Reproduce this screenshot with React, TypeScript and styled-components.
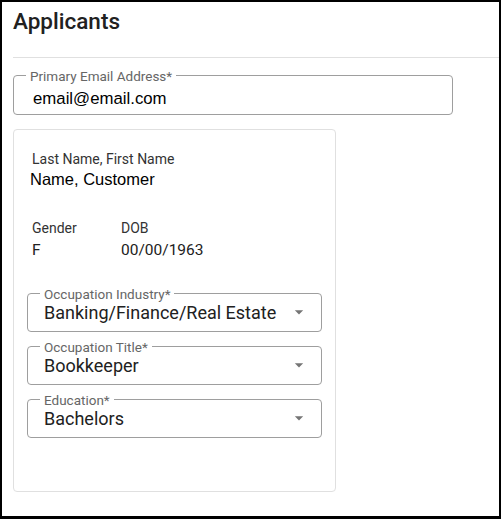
import React from "react";
import styled, { createGlobalStyle } from "styled-components";

const Global = createGlobalStyle`
  html, body { margin: 0; padding: 0; background: #ffffff; }
  * { box-sizing: border-box; }
`;

const Frame = styled.div`
  width: 501px;
  height: 519px;
  border: 2px solid #000;
  border-bottom-width: 3px;
  background: #fff;
  font-family: Roboto, "Liberation Sans", Arial, sans-serif;
  color: #212121;
  overflow: hidden;
`;

const Header = styled.header`
  padding: 6px 0 0 11px;
  height: 55px;
`;

const Title = styled.h1`
  margin: 0;
  font-size: 22.5px;
  line-height: 26px;
  font-weight: 500;
  color: #212121;
`;

const Divider = styled.hr`
  margin: 0 0 0 11px;
  border: 0;
  height: 1px;
  background: #e0e0e0;
`;

const Body = styled.main`
  padding: 17px 0 0 11px;
  display: flex;
  flex-direction: column;
  align-items: flex-start;
  gap: 14px;
`;

const OutlinedBox = styled.div<{ $width?: number; $height: number }>`
  position: relative;
  width: ${(p) => (p.$width ? `${p.$width}px` : "100%")};
  height: ${(p) => p.$height}px;
  border: 1px solid #9e9e9e;
  border-radius: 4px;
  display: flex;
  align-items: flex-start;
`;

const FloatLabel = styled.span`
  position: absolute;
  top: -8px;
  left: 12px;
  padding: 0 4px;
  background: #fff;
  font-size: 13.5px;
  line-height: 16px;
  color: #666;
  white-space: nowrap;
`;

const TextValue = styled.span`
  padding: 13px 0 0 19px;
  font-family: "Liberation Sans", Arial, sans-serif;
  font-size: 16.8px;
  line-height: 19px;
  color: #000;
`;

const SelectValue = styled.span`
  flex: 1;
  padding: 8px 0 0 16px;
  font-size: 18px;
  line-height: 22px;
  color: #212121;
  white-space: nowrap;
`;

const Arrow = styled.svg`
  position: absolute;
  right: 12px;
  top: 8px;
  width: 20px;
  height: 20px;
  fill: #757575;
`;

const Card = styled.section`
  width: 323px;
  border: 1px solid #e0e0e0;
  border-radius: 4px;
  padding: 21px 13px 53px;
  display: flex;
  flex-direction: column;
`;

const InfoBlock = styled.div`
  padding-left: 5px;
  display: flex;
  flex-direction: column;
`;

const InfoRow = styled.div`
  display: flex;
  margin-top: 31px;
`;

const InfoCell = styled.div<{ $width?: number }>`
  width: ${(p) => (p.$width ? `${p.$width}px` : "auto")};
  display: flex;
  flex-direction: column;
`;

const InfoLabel = styled.span`
  font-size: 14px;
  line-height: 16px;
  color: #333;
`;

const NameValue = styled.span`
  margin: 3px 0 0 -2px;
  font-family: "Liberation Sans", Arial, sans-serif;
  font-size: 16.5px;
  line-height: 19px;
  color: #000;
`;

const InfoValue = styled.span`
  margin-top: 5px;
  font-size: 15.5px;
  line-height: 18px;
  color: #212121;
`;

const Selects = styled.div`
  margin-top: 34px;
  display: flex;
  flex-direction: column;
  gap: 14px;
`;

function Select({ label, value }: { label: string; value: string }) {
  return (
    <OutlinedBox $height={39}>
      <FloatLabel>{label}</FloatLabel>
      <SelectValue>{value}</SelectValue>
      <Arrow viewBox="0 0 24 24">
        <path d="M7 10l5 5 5-5z" />
      </Arrow>
    </OutlinedBox>
  );
}

export default function App() {
  return (
    <>
      <Global />
      <Frame>
        <Header>
          <Title>Applicants</Title>
        </Header>
        <Divider />
        <Body>
          <OutlinedBox $width={440} $height={40}>
            <FloatLabel>Primary Email Address*</FloatLabel>
            <TextValue>email@email.com</TextValue>
          </OutlinedBox>
          <Card>
            <InfoBlock>
              <InfoCell>
                <InfoLabel>Last Name, First Name</InfoLabel>
                <NameValue>Name, Customer</NameValue>
              </InfoCell>
              <InfoRow>
                <InfoCell $width={89}>
                  <InfoLabel>Gender</InfoLabel>
                  <InfoValue>F</InfoValue>
                </InfoCell>
                <InfoCell>
                  <InfoLabel>DOB</InfoLabel>
                  <InfoValue>00/00/1963</InfoValue>
                </InfoCell>
              </InfoRow>
            </InfoBlock>
            <Selects>
              <Select label="Occupation Industry*" value="Banking/Finance/Real Estate" />
              <Select label="Occupation Title*" value="Bookkeeper" />
              <Select label="Education*" value="Bachelors" />
            </Selects>
          </Card>
        </Body>
      </Frame>
    </>
  );
}
